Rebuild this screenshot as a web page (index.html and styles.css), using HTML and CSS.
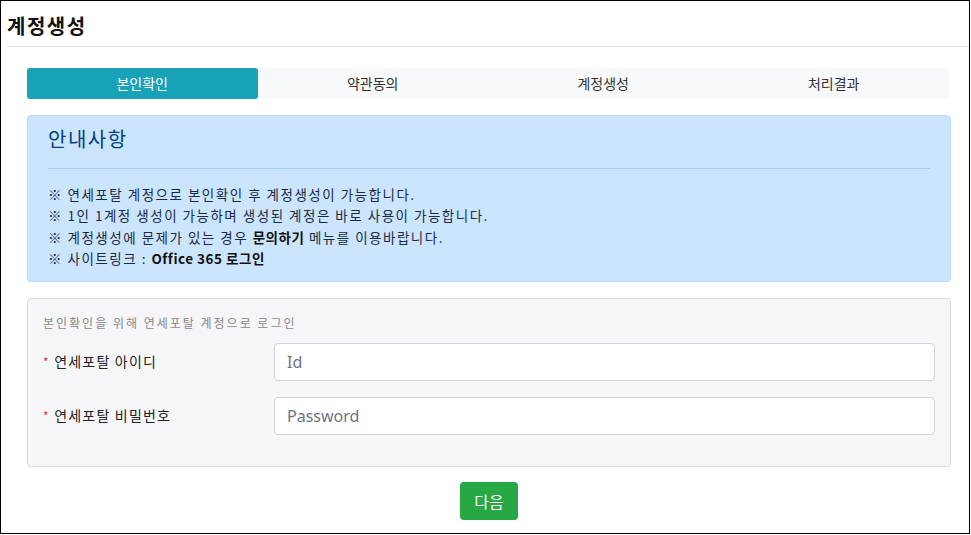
FILE: index.html
```html
<!DOCTYPE html>
<html>

<head>
  <title>계정생성</title>
  <link rel="stylesheet" href="styles.css">
</head>

<body>
  <div class="frame">
    <h2 class="page-title">계정생성</h2>

    <div class="content">
      <!-- 단계 표시 -->
      <ul class="steps">
        <li class="active">본인확인</li>
        <li>약관동의</li>
        <li>계정생성</li>
        <li>처리결과</li>
      </ul>

      <div class="notice">
        <h4>안내사항</h4>
        <hr>
        <p>※ 연세포탈 계정으로 본인확인 후 계정생성이 가능합니다.</p>
        <p>※ 1인 1계정 생성이 가능하며 생성된 계정은 바로 사용이 가능합니다.</p>
        <p>※ 계정생성에 문제가 있는 경우 <b>문의하기</b> 메뉴를 이용바랍니다.</p>
        <p>※ 사이트링크 : <b>Office 365 로그인</b></p>
      </div>

      <div class="login-box">
        <div class="login-title">본인확인을 위해 연세포탈 계정으로 로그인</div>
        <div class="form-row">
          <label for="userid"><span class="req">*</span> 연세포탈 아이디</label>
          <input type="text" id="userid" placeholder="Id">
        </div>
        <div class="form-row">
          <label for="userpw"><span class="req">*</span> 연세포탈 비밀번호</label>
          <input type="password" id="userpw" placeholder="Password">
        </div>
      </div>

      <div class="actions">
        <button class="btn-next">다음</button>
      </div>
    </div>
  </div>
</body>

</html>
```

FILE: styles.css
```css
/* 계정생성 - 본인확인 화면 */
body {
  margin: 0;
  font-family: "Noto Sans CJK KR", "Noto Sans", sans-serif;
  color: #212529;
}

.frame {
  width: 970px;
  height: 534px;
  box-sizing: border-box;
  border: 1px solid #000;
}

.page-title {
  margin: 0 0 0 6px;
  height: 45px;
  line-height: 50px;
  font-size: 20px;
  font-weight: bold;
  letter-spacing: 1.5px;
  color: #111;
  border-bottom: 1px solid #dee2e6;
}

.content {
  padding: 21px 18px 0 26px;
}

.steps {
  display: flex;
  margin: 0 2px 0 0;
  padding: 0;
  list-style: none;
  background-color: #f8f9fa;
  border-radius: 3px;
}

.steps li {
  flex: 1;
  height: 31px;
  line-height: 31px;
  text-align: center;
  font-size: 14px;
  color: #333;
}

.steps li.active {
  background-color: #17a2b8;
  color: #fff;
  border-radius: 3px;
}

.notice {
  margin-top: 16px;
  padding: 8px 20px 12px 20px;
  height: 167px;
  box-sizing: border-box;
  background-color: #cce5ff;
  border: 1px solid #b8daff;
  border-radius: 4px;
  color: #004085;
}

.notice h4 {
  margin: 0;
  font-size: 20px;
  font-weight: normal;
  line-height: 30px;
  letter-spacing: 1.5px;
}

.notice hr {
  margin: 14px 0 15px 0;
  border: 0;
  border-top: 1px solid #9fcdff;
}

.notice p {
  margin: 0;
  font-size: 13.5px;
  line-height: 21.4px;
  letter-spacing: 1.5px;
  color: #1a2b3f;
}

.notice b {
  color: #111;
  letter-spacing: 0.5px;
}

.login-box {
  margin-top: 16px;
  height: 169px;
  box-sizing: border-box;
  padding: 14px 15px 0 15px;
  background-color: #f6f6f8;
  border: 1px solid #dcdcdc;
  border-radius: 4px;
}

.login-title {
  font-size: 12px;
  color: #888;
  line-height: 20px;
  letter-spacing: 2px;
  margin-bottom: 10px;
}

.form-row {
  display: flex;
  align-items: center;
  margin-bottom: 16px;
}

.form-row label {
  width: 231px;
  flex-shrink: 0;
  font-size: 14px;
  letter-spacing: 1.2px;
  color: #222;
  margin-top: -3px;
}

.form-row .req {
  color: #e3342f;
  font-size: 12px;
}

.form-row input {
  flex: 1;
  height: 38px;
  box-sizing: border-box;
  padding: 0 12px;
  font-family: "Noto Sans", sans-serif;
  font-size: 16px;
  color: #495057;
  background-color: #fff;
  border: 1px solid #ced4da;
  border-radius: 4px;
}

.form-row input::placeholder {
  color: #6c757d;
}

.actions {
  margin-top: 15px;
  text-align: center;
}

.btn-next {
  width: 58px;
  height: 38px;
  font-family: "Noto Sans CJK KR", sans-serif;
  font-size: 16px;
  color: #fff;
  background-color: #28a745;
  border: none;
  border-radius: 4px;
  cursor: pointer;
}
```
